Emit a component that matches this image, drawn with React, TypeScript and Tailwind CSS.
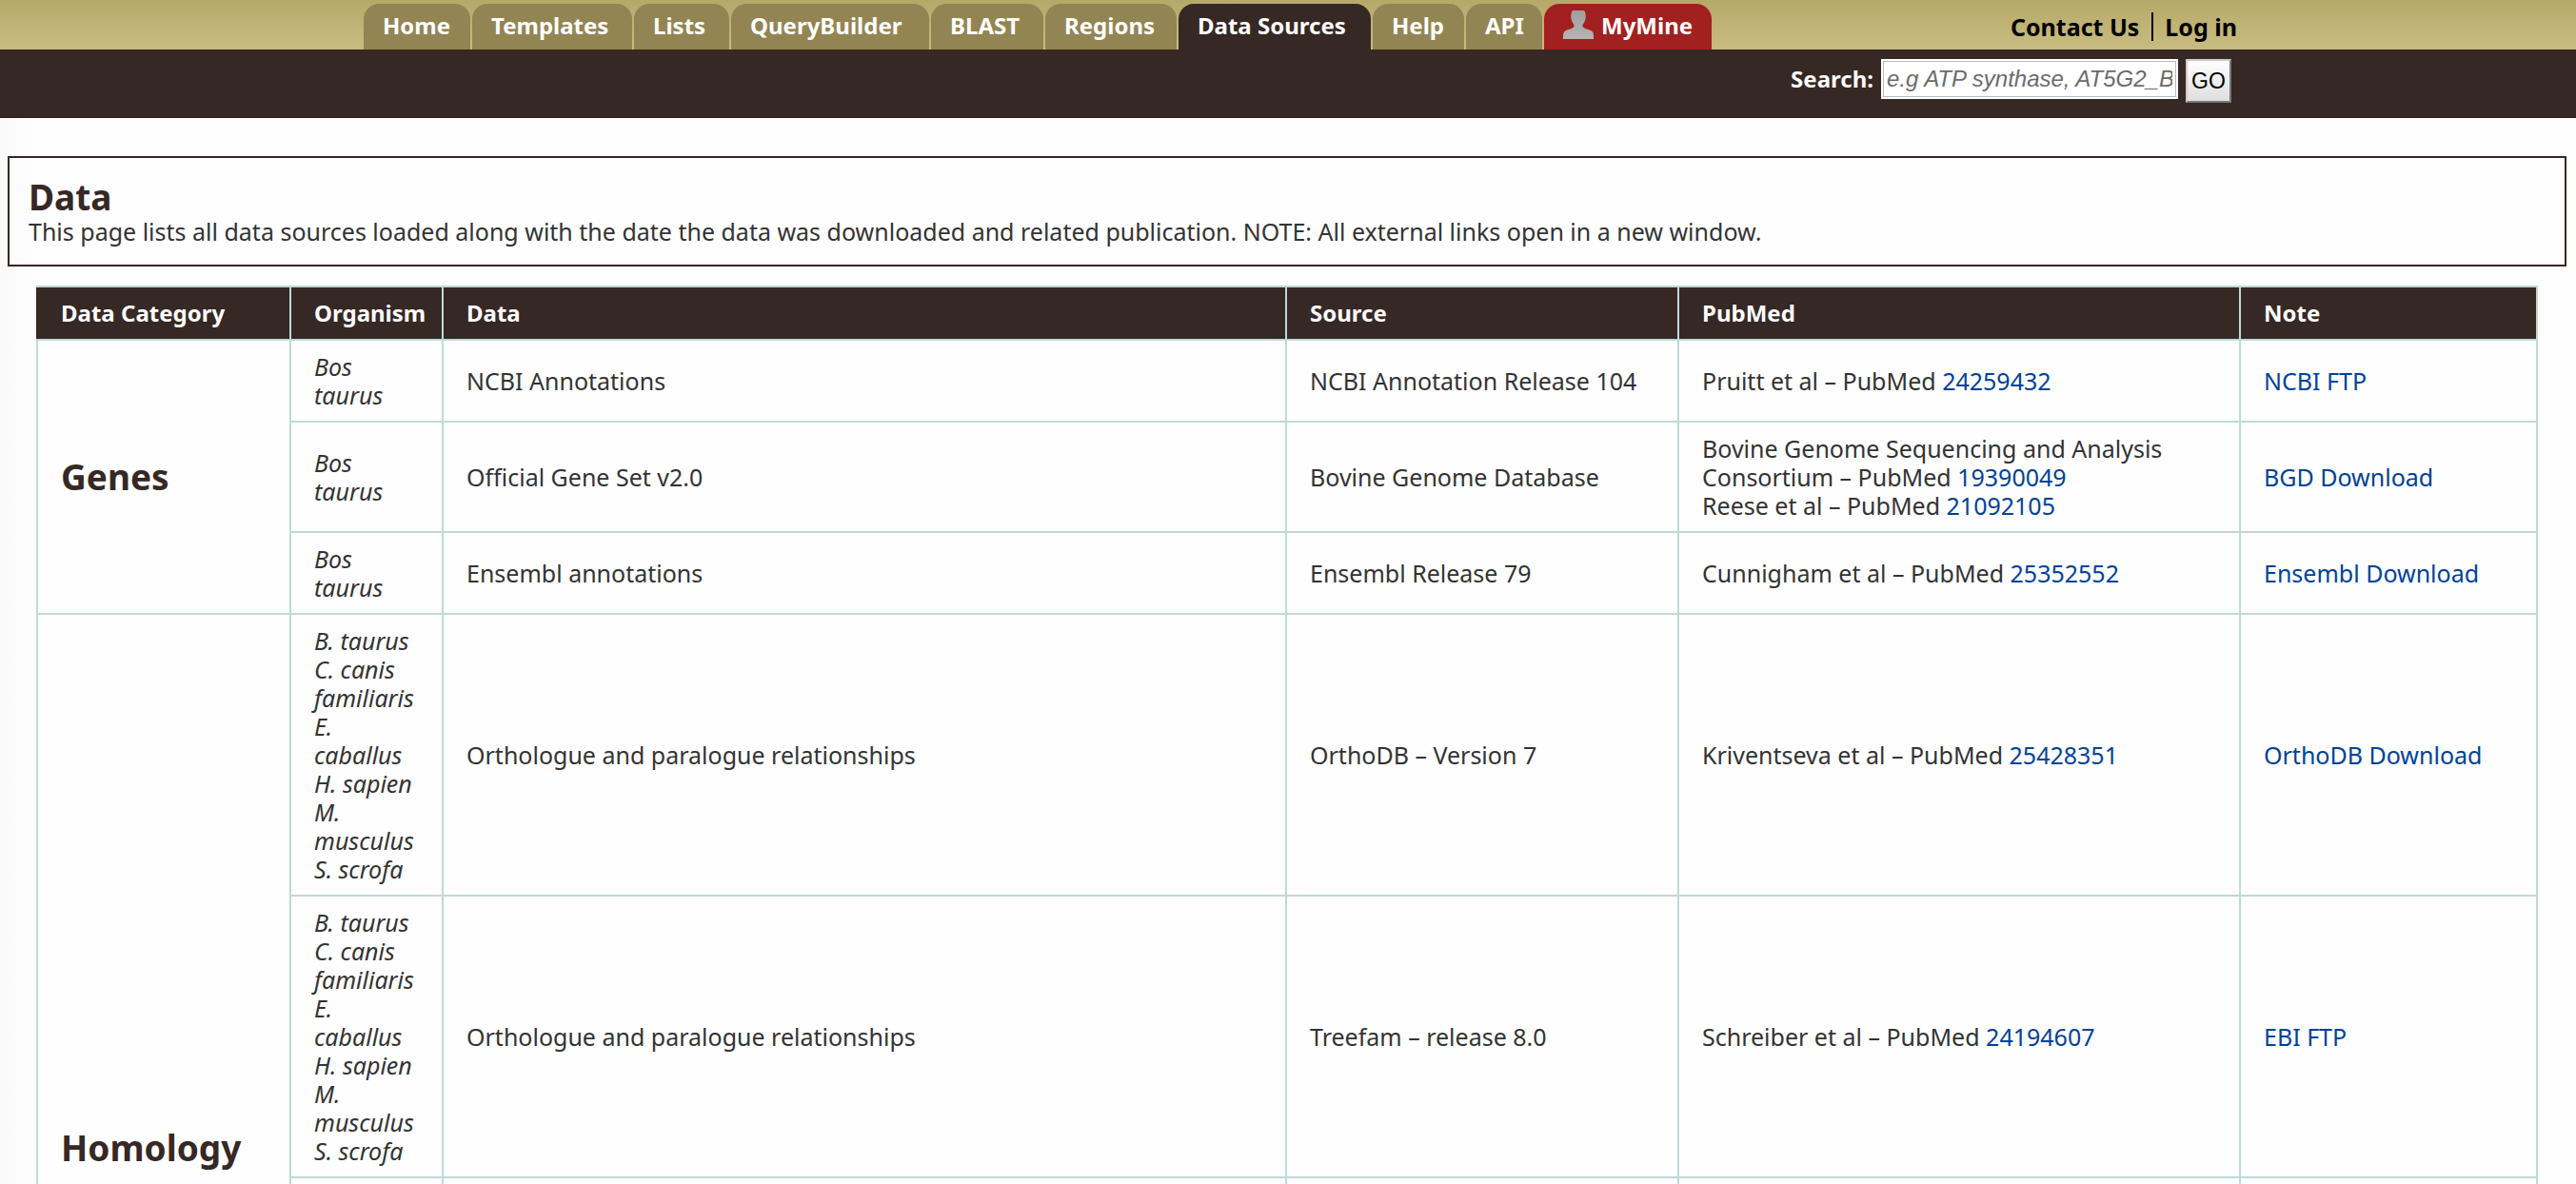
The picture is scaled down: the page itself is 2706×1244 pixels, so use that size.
import type { ReactNode } from "react";

const TABS = [
  { label: "Home", width: "w-[112px]" },
  { label: "Templates", width: "w-[168px]" },
  { label: "Lists", width: "w-[100px]" },
  { label: "QueryBuilder", width: "w-[208px]" },
  { label: "BLAST", width: "w-[118px]" },
  { label: "Regions", width: "w-[138px]" },
  { label: "Data Sources", width: "w-[202px]" },
  { label: "Help", width: "w-[96px]" },
  { label: "API", width: "w-[80px]" },
];

const ORTHOLOGY_ORGANISMS = [
  "B. taurus",
  "C. canis familiaris",
  "E. caballus",
  "H. sapien",
  "M. musculus",
  "S. scrofa",
];

type Citation = { text: string; id: string };

type Row = {
  category?: { name: string; span: number };
  organisms: string[];
  data: string;
  source: string;
  citations: Citation[];
  note: string;
};

const ROWS: Row[] = [
  {
    category: { name: "Genes", span: 3 },
    organisms: ["Bos taurus"],
    data: "NCBI Annotations",
    source: "NCBI Annotation Release 104",
    citations: [{ text: "Pruitt et al – PubMed", id: "24259432" }],
    note: "NCBI FTP",
  },
  {
    organisms: ["Bos taurus"],
    data: "Official Gene Set v2.0",
    source: "Bovine Genome Database",
    citations: [
      { text: "Bovine Genome Sequencing and Analysis Consortium – PubMed", id: "19390049" },
      { text: "Reese et al – PubMed", id: "21092105" },
    ],
    note: "BGD Download",
  },
  {
    organisms: ["Bos taurus"],
    data: "Ensembl annotations",
    source: "Ensembl Release 79",
    citations: [{ text: "Cunnigham et al – PubMed", id: "25352552" }],
    note: "Ensembl Download",
  },
  {
    category: { name: "Homology", span: 3 },
    organisms: ORTHOLOGY_ORGANISMS,
    data: "Orthologue and paralogue relationships",
    source: "OrthoDB – Version 7",
    citations: [{ text: "Kriventseva et al – PubMed", id: "25428351" }],
    note: "OrthoDB Download",
  },
  {
    organisms: ORTHOLOGY_ORGANISMS,
    data: "Orthologue and paralogue relationships",
    source: "Treefam – release 8.0",
    citations: [{ text: "Schreiber et al – PubMed", id: "24194607" }],
    note: "EBI FTP",
  },
];

const HEADINGS = ["Data Category", "Organism", "Data", "Source", "PubMed", "Note"];

function UserIcon() {
  return (
    <svg width="32" height="30" viewBox="0 0 32 30" aria-hidden="true">
      <defs>
        <linearGradient id="user-fill" x1="0" y1="0" x2="0" y2="1">
          <stop offset="0" stopColor="#9f9f9f" />
          <stop offset="1" stopColor="#b4b4b4" />
        </linearGradient>
      </defs>
      <path
        fill="url(#user-fill)"
        d="M10 0H22C23.500 2 24 4.500 23.700 7.500C23.400 10.500 22 13 20.500 15V17C22 19 25 19.500 28 20.500C31 21.700 32 23.500 32 26.500V30H0V26.500C0 23.500 1 21.700 4 20.500C7 19.500 10 19 11.500 17V15C10 13 8.600 10.500 8.300 7.500C8 4.500 8.500 2 10 0Z"
      />
    </svg>
  );
}

function Tab({ label, width, active }: { label: string; width: string; active: boolean }) {
  return (
    <a
      href="#"
      className={`flex h-12 shrink-0 rounded-t-2xl pl-5 pt-[7px] ${width} ${active ? "bg-[#362824]" : "bg-[#938553]"}`}
    >
      {label}
    </a>
  );
}

function Cell({ children }: { children?: ReactNode }) {
  return <td className="border-2 border-[#c0d9d7] px-6 py-3 align-middle">{children}</td>;
}

export default function App() {
  return (
    <div className="h-screen overflow-hidden bg-white bg-linear-to-r from-[#fafafa] to-[#fefefe] to-[36px] font-['Noto_Sans','Open_Sans',sans-serif] text-[25px] leading-[30px] text-[#333]">
      <header className="text-[24px] font-bold">
        <div className="bg-linear-to-b from-[#b5a96a] to-[#c9bc80]">
          <div className="mx-auto flex h-[52px] max-w-[1994px] items-end justify-between pl-[26px]">
            <nav className="flex gap-[2px] leading-[32px] text-white">
              {TABS.map((tab) => (
                <Tab key={tab.label} {...tab} active={tab.label === "Data Sources"} />
              ))}
              <a href="#" className="flex h-12 w-[176px] shrink-0 gap-2 rounded-t-2xl bg-[#a32020] pl-5 pt-[7px]">
                <UserIcon />
                MyMine
              </a>
            </nav>
            <div className="flex items-center self-center pt-1 text-[25px] text-black">
              <a href="#" className="border-r-2 border-black pr-[13px]">
                Contact Us
              </a>
              <a href="#" className="pl-3">
                Log in
              </a>
            </div>
          </div>
        </div>
        <div className="border-b border-[#2b1f1c] bg-[#362824]">
          <form className="mx-auto flex h-[71px] max-w-[1994px] items-start justify-end pr-[6px] pt-[10px]">
            <label htmlFor="search" className="pr-2 pt-[6px] text-white">
              Search:
            </label>
            <input
              id="search"
              type="text"
              placeholder="e.g ATP synthase, AT5G2_BOVIN"
              className="mr-2 h-[42px] w-[312px] border-2 border-white bg-white px-1 font-['Liberation_Sans',sans-serif] text-[24px] font-normal italic text-black inset-ring inset-ring-[#b9b9c4] placeholder:text-[#6b6b6b]"
            />
            <button
              type="button"
              className="h-[46px] w-12 border-2 border-t-[#cfcbcb] border-r-[#77787a] border-b-[#77787a] border-l-[#cfcbcb] bg-linear-to-b from-white to-[#dedede] font-['Liberation_Sans',sans-serif] text-[23px] font-normal text-black"
            >
              GO
            </button>
          </form>
        </div>
      </header>

      <main className="pt-10">
        <section className="ml-2 mr-[10px] border-2 border-[#362824] px-[20px] pt-5 pb-5">
          <h1 className="text-[37px] leading-[42px] font-bold text-[#362824]">Data</h1>
          <p>This page lists all data sources loaded along with the date the data was downloaded and related publication. NOTE: All external links open in a new window.</p>
        </section>

        <div className="ml-[38px] mr-10 mt-5">
          <table className="w-full table-fixed border-collapse">
            <colgroup>
              <col className="w-[266px]" />
              <col className="w-[160px]" />
              <col />
              <col className="w-[412px]" />
              <col className="w-[590px]" />
              <col className="w-[312px]" />
            </colgroup>
            <thead>
              <tr>
                {HEADINGS.map((heading) => (
                  <th
                    key={heading}
                    scope="col"
                    className="border-2 border-[#c0d9d7] bg-[#362824] py-3 pl-6 text-left text-[24px] font-bold text-white first:border-l-[#362824]"
                  >
                    {heading}
                  </th>
                ))}
              </tr>
            </thead>
            <tbody>
              {ROWS.map((row) => (
                <tr key={row.source}>
                  {row.category && (
                    <th
                      scope="rowgroup"
                      rowSpan={row.category.span}
                      className="border-2 border-[#c0d9d7] px-6 py-3 text-left align-middle text-[37px] leading-[44px] font-bold text-[#362824]"
                    >
                      {row.category.name}
                    </th>
                  )}
                  <Cell>
                    {row.organisms.map((organism) => (
                      <div key={organism} className="italic">
                        {organism}
                      </div>
                    ))}
                  </Cell>
                  <Cell>{row.data}</Cell>
                  <Cell>{row.source}</Cell>
                  <Cell>
                    {row.citations.map((citation) => (
                      <div key={citation.id}>
                        {citation.text}{" "}
                        <a href="#" className="text-[#004299]">
                          {citation.id}
                        </a>
                      </div>
                    ))}
                  </Cell>
                  <Cell>
                    <a href="#" className="text-[#004299]">
                      {row.note}
                    </a>
                  </Cell>
                </tr>
              ))}
              <tr className="h-[530px]">
                <Cell />
                <Cell />
                <Cell />
                <Cell />
                <Cell />
              </tr>
            </tbody>
          </table>
        </div>
      </main>
    </div>
  );
}
